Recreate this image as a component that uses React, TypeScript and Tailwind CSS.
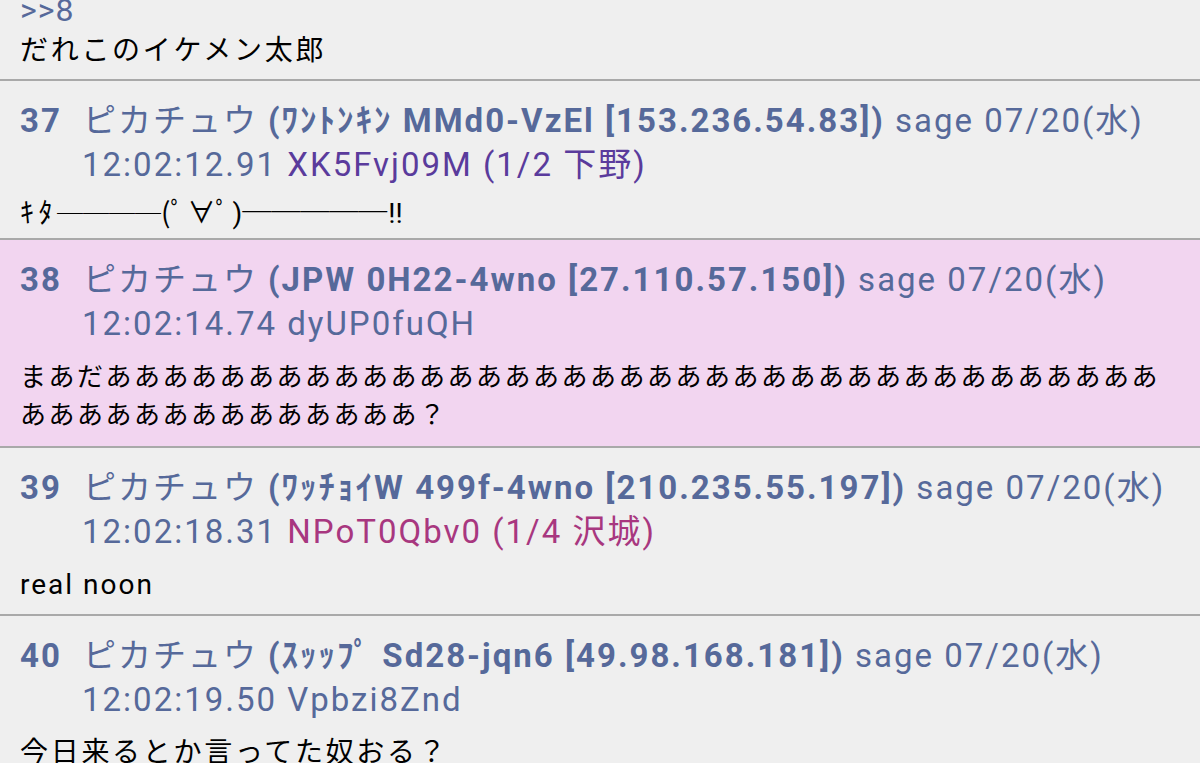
import React from "react";

type Post = {
  no: number;
  trip: string;
  ip: string;
  time: string;
  id: string;
  idColor?: string;
  count?: string;
  body: React.ReactNode;
  pink?: boolean;
  bodyClass: string;
};

const dash = "─";

const posts: Post[] = [
  {
    no: 37,
    trip: "ﾜﾝﾄﾝｷﾝ MMd0-VzEl",
    ip: "153.236.54.83",
    time: "12:02:12.91",
    id: "XK5Fvj09M",
    idColor: "text-[#5a3b9c]",
    count: "(1/2 下野)",
    body: (
      <div className="whitespace-nowrap text-[28px] leading-[38px]">
        <span className="tracking-[4.5px]">ｷﾀ</span>
        <span className="text-[26px]">{dash.repeat(4)}</span>
        <span className="tracking-[3px]">(ﾟ∀ﾟ</span>
        <span>)</span>
        <span className="text-[29px]">{dash.repeat(5)}</span>
        <span className="ml-[1px]">!!</span>
      </div>
    ),
    bodyClass: "mt-[7px] pb-[5px]",
  },
  {
    no: 38,
    trip: "JPW 0H22-4wno",
    ip: "27.110.57.150",
    time: "12:02:14.74",
    id: "dyUP0fuQH",
    body: (
      <div className="text-[26px] leading-[38px] tracking-[2.5px] whitespace-nowrap">
        <div>{"まあだ" + "あ".repeat(37)}</div>
        <div>{"あ".repeat(14) + "？"}</div>
      </div>
    ),
    pink: true,
    bodyClass: "mt-[12px] pb-[12px]",
  },
  {
    no: 39,
    trip: "ﾜｯﾁｮｲW 499f-4wno",
    ip: "210.235.55.197",
    time: "12:02:18.31",
    id: "NPoT0Qbv0",
    idColor: "text-[#a8377f]",
    count: "(1/4 沢城)",
    body: <div className="text-[28px] leading-[38px] tracking-[2px]">real noon</div>,
    bodyClass: "mt-[12px] pb-[10px]",
  },
  {
    no: 40,
    trip: "ｽｯｯﾌﾟ Sd28-jqn6",
    ip: "49.98.168.181",
    time: "12:02:19.50",
    id: "Vpbzi8Znd",
    body: (
      <div className="text-[28px] leading-[38px] tracking-[2.7px]">今日来るとか言ってた奴おる？</div>
    ),
    bodyClass: "mt-[12px] pb-[12px]",
  },
];

function PostRow({ p }: { p: Post }) {
  return (
    <div
      className={`border-t-2 border-[#a9a9a9] pl-[20px] pt-[18px] ${
        p.pink ? "bg-[#f2d5f0]" : "bg-[#efefef]"
      }`}
    >
      <div className="text-[#56699a] text-[33px] leading-[44px] tracking-[2px] whitespace-nowrap">
        <span className="font-bold">{p.no}</span>
        <span className="ml-[21px]">ピカチュウ</span>{" "}
        <span className="font-bold">
          ({p.trip} [{p.ip}])
        </span>{" "}
        <span>sage 07/20(水)</span>
      </div>
      <div className="pl-[62px] text-[#56699a] text-[33px] leading-[44px] tracking-[2px] whitespace-nowrap">
        <span>{p.time}</span>{" "}
        <span className={p.idColor ?? ""}>{p.id}</span>
        {p.count && (
          <>
            {" "}
            <span className={p.idColor ?? ""}>{p.count}</span>
          </>
        )}
      </div>
      <div className={`text-black ${p.bodyClass}`}>{p.body}</div>
    </div>
  );
}

export default function App() {
  return (
    <div
      className="h-[763px] w-[1200px] overflow-hidden bg-[#efefef]"
      style={{ fontFamily: "Roboto, 'Noto Sans CJK JP', sans-serif" }}
    >
      <div className="-mt-[12px] pl-[20px] pb-[9px]">
        <div className="text-[#56699a] text-[32px] leading-[44px] tracking-[1px]">&gt;&gt;8</div>
        <div className="text-black text-[28px] leading-[38px] tracking-[2.7px]">
          だれこのイケメン太郎
        </div>
      </div>
      {posts.map((p) => (
        <PostRow key={p.no} p={p} />
      ))}
    </div>
  );
}
